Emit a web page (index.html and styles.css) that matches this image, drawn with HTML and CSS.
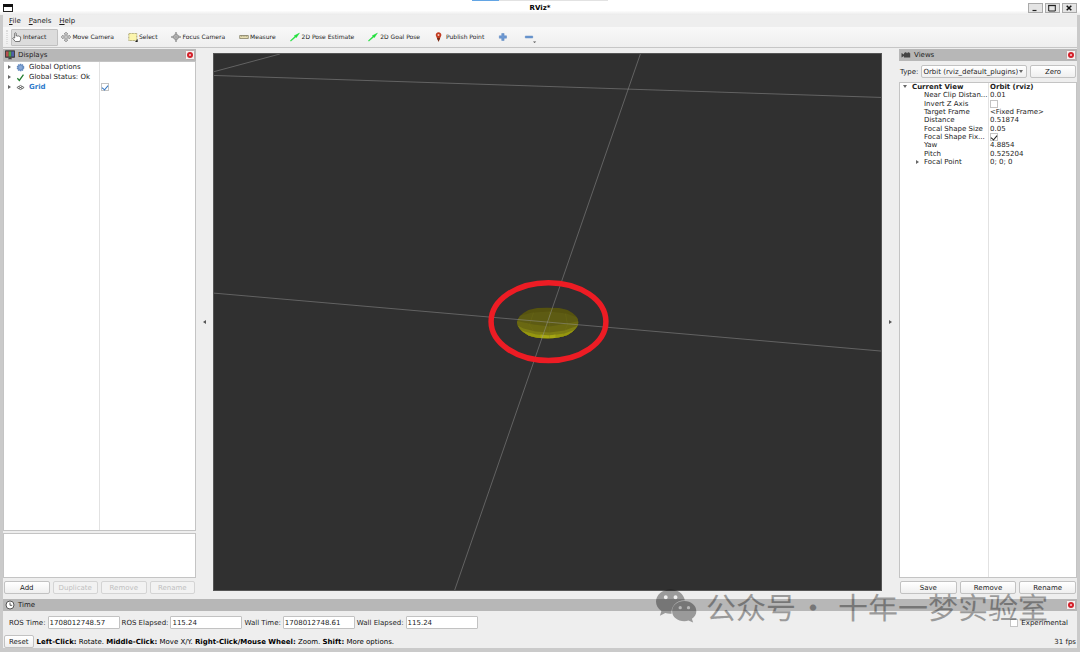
FILE: index.html
```html
<!DOCTYPE html>
<html lang="en">
<head>
<meta charset="utf-8">
<title>RViz*</title>
<link rel="stylesheet" href="styles.css">
</head>
<body>
<svg class="defs" aria-hidden="true">
  <symbol id="close" viewBox="0 0 11 11"><rect x=".5" y=".5" width="10" height="10" rx="1" fill="#f4f0f0" stroke="#b5a5a5"/><circle cx="5.5" cy="5.5" r="3.3" fill="#d4202a"/><path d="M4.500 4.500l2 2M6.500 4.500l-2 2" stroke="#fff" stroke-width=".7"/></symbol>
  <symbol id="cross" viewBox="0 0 10 10"><path d="M5 0l2 2H6v2h2V3l2 2-2 2V6H6v2h1l-2 2-2-2h1V6H2v1L0 5l2-2v1h2V2H3z" fill="#c4c4c4" stroke="#777" stroke-width=".5"/></symbol>
  <symbol id="arrow" viewBox="0 0 10 10"><path d="M.8 9.200L.4 8.500 5 4.200l-.8-.4L9.500 1 6.300 5.700l-.5-.6z" fill="#1fe03a" stroke="#1fe03a" stroke-width=".4"/></symbol>
</svg>

<div class="window">
  <header class="titlebar">
    <svg class="app-icon" viewBox="0 0 10 8"><rect x=".5" y=".5" width="9" height="7" fill="#fff" stroke="#222"/><path d="M0 0h10v3H0z" fill="#111"/></svg>
    <h1 class="title">RViz*</h1>
    <span class="progress"></span>
    <div class="window-buttons">
      <button aria-label="Minimize"><svg viewBox="0 0 8 8"><path d="M1.500 6.500h4" stroke="#222" stroke-width="1.200"/></svg></button>
      <button aria-label="Maximize"><svg viewBox="0 0 8 8"><path d="M.7 1.500h6.600v5.500H.7z" fill="none" stroke="#222"/><path d="M.2 1.500h7.600" stroke="#222" stroke-width="1.300"/></svg></button>
      <button aria-label="Close"><svg viewBox="0 0 8 8"><path d="M1.700 1.700l4.600 4.600M6.300 1.700L1.700 6.300" stroke="#111" stroke-width="1.500"/></svg></button>
    </div>
  </header>

  <nav class="menubar">
    <button><u>F</u>ile</button>
    <button><u>P</u>anels</button>
    <button><u>H</u>elp</button>
  </nav>

  <div class="toolbar">
    <span class="grip"></span>
    <button class="tool active"><svg viewBox="0 0 10 10"><path d="M2.700 6V1.300q.8-1 1.500 0V4q.8-.7 1.500.2.800-.6 1.400.2 1-.3 1.500.5v2.300L7.800 9.500H3.300L.7 6.300q.5-1 2-.3z" fill="#fff" stroke="#444" stroke-width=".7"/></svg>Interact</button>
    <button class="tool"><svg><use href="#cross"/></svg>Move Camera</button>
    <button class="tool"><svg viewBox="0 0 10 10"><path d="M.8 1.500h8v7h-8z" fill="#fbf5ad" stroke="#8b8447" stroke-width=".7" stroke-dasharray="1 .5"/><path d="M9.700 7v3H7z" fill="#222"/></svg>Select</button>
    <button class="tool"><svg viewBox="0 0 10 10"><path d="M5 0l1.200 3L10 5 6.500 6.200 5 10 3.700 6.500 0 5l3.500-1.500z" fill="#ccc" stroke="#888" stroke-width=".5"/><circle cx="5" cy="5" r="2.500" fill="none" stroke="#888" stroke-width=".7"/><path d="M5 0v10M0 5h10" stroke="#888" stroke-width=".6"/></svg>Focus Camera</button>
    <button class="tool"><svg viewBox="0 0 10 10"><path d="M.7 3.500h8.600v3H.7z" fill="#e8dfb4" stroke="#777258" stroke-width=".7"/><path d="M2.500 3.500V5M4.200 3.500V5M5.900 3.500V5M7.600 3.500V5" stroke="#777258" stroke-width=".4"/></svg>Measure</button>
    <button class="tool wide-label"><svg><use href="#arrow"/></svg>2D Pose Estimate</button>
    <button class="tool wide-label"><svg><use href="#arrow"/></svg>2D Goal Pose</button>
    <button class="tool wide-label"><svg viewBox="0 0 10 10"><path d="M4.500 9.800L1.800 3.600A2.800 2.800 0 1 1 7.300 3.600z" fill="#c23a20"/><path d="M3 6l1.500 3.800L6.200 6z" fill="#6f2d18"/><circle cx="4.500" cy="2.900" r="1" fill="#f5cfc0"/></svg>Publish Point</button>
    <button class="tool" aria-label="Add tool"><svg viewBox="0 0 10 10"><path d="M3.700 1.500h2.400v2.300h2.400v2.400H6.100v2.300H3.700V6.200H1.300V3.800h2.400z" fill="#6d98d2" stroke="#4a78b8" stroke-width=".4"/></svg></button>
    <button class="tool" aria-label="Remove tool"><svg class="wide" viewBox="0 0 14 10"><path d="M3.300 4h7.400v2H3.300z" fill="#6d98d2" stroke="#4a78b8" stroke-width=".4"/><path d="M11 9.500h3.200l-1.600 1.500z" fill="#555"/></svg></button>
  </div>

  <main class="workspace">
    <section class="panel displays">
      <h2 class="dock-title"><svg viewBox="0 0 10 10"><path d="M.4.8h9.200v6.500H.4z" fill="#333" stroke="#333" stroke-width=".8"/><path d="M1 1.400h2.700v5.200H1z" fill="#b85050"/><path d="M3.700 1.400h2.600v5.200H3.700z" fill="#4aa84a"/><path d="M6.300 1.400H9v5.200H6.300z" fill="#5060ac"/><path d="M3 9.300h4L6 7.500H4z" fill="#444"/></svg>Displays<button aria-label="Close Displays"><svg><use href="#close"/></svg></button></h2>
      <div class="box tree-box">
        <table class="tree">
          <tr><td><span class="row"><i class="twisty"></i><svg viewBox="0 0 10 10"><circle cx="5" cy="5" r="3.500" fill="#87a9d6" stroke="#6288bd" stroke-width="1.500" stroke-dasharray="1.500 .7"/><circle cx="5" cy="5" r="2.500" fill="#87a9d6" stroke="#5279b2" stroke-width=".5"/></svg>Global Options</span></td><td></td></tr>
          <tr><td><span class="row"><i class="twisty"></i><svg viewBox="0 0 10 10"><path d="M1.500 5.800l2.200 2.500L8.300 1.700" fill="none" stroke="#207c2c" stroke-width="1.400"/></svg>Global Status: Ok</span></td><td></td></tr>
          <tr><td><span class="row grid-name"><i class="twisty"></i><svg viewBox="0 0 10 10"><path d="M1 5l4-2.300L9 5 5 7.300zM3 3.900l4 2.300M3 6.200l4-2.300" fill="none" stroke="#555" stroke-width=".9"/></svg>Grid</span></td><td><input type="checkbox" class="check blue" checked aria-label="Grid enabled"></td></tr>
        </table>
      </div>
      <div class="box description"></div>
      <div class="actions">
        <button class="btn">Add</button>
        <button class="btn" disabled>Duplicate</button>
        <button class="btn" disabled>Remove</button>
        <button class="btn" disabled>Rename</button>
      </div>
    </section>

    <button class="collapse" aria-label="Hide left dock"><i class="left"></i></button>
    <div class="viewport">
      <svg class="scene" viewBox="213 53 668 537" preserveAspectRatio="none" role="img" aria-label="3D view">
        <defs>
          <clipPath id="disc"><path d="M516.500 322Q517 315 528 309.500 536 307 547 307 560 307 567 309.500 578 315 578 322 577 329 567 334.500 558 338 547 338 536 338 528 335 517 329 516.500 322z"/></clipPath>
        </defs>
        <g clip-path="url(#disc)">
          <path d="M515 305h65v35h-65z" fill="#56530f"/>
          <path d="M515 316l17-4 17-1 17 2 14 5v25h-65z" fill="#5d5b13"/>
          <path d="M515 320l18 4 16 2 18-3 13-3v20h-65z" fill="#6a6812"/>
          <path d="M515 324l8 4 12 3 14 1 15-2 11-4 5-3v17h-65z" fill="#7d7d14"/>
          <path d="M515 327l9 4 12 3 13 1 15-2 11-4 5-2v13h-65z" fill="#96970f"/>
          <path d="M540 334l8 1 7-1v4h-15z" fill="#a5a614"/>
          <path d="M533 312l-4 12 6 10M549 311v27M565 313l2 11-4 10" fill="none" stroke="#7a7a1c" stroke-width=".5" opacity=".5"/>
        </g>
        <path d="M213 70.700L279 53M213 74.500L881 96.500M213 292.500L881 350.500M640 53L454 590" fill="none" stroke="#999" stroke-width=".8" opacity=".6"/>
        <ellipse cx="548" cy="321" rx="57.500" ry="39" fill="none" stroke="#ed1c24" stroke-width="5.500"/>
      </svg>
    </div>
    <button class="collapse" aria-label="Hide right dock"><i class="right"></i></button>

    <section class="panel views">
      <h2 class="dock-title"><svg viewBox="0 0 10 10"><path d="M.5 3l2.500 1.500V3.200h6.200v4.300H3V6L.5 7.500z" fill="#444"/><circle cx="4.600" cy="3.500" r="1.200" fill="#444"/><circle cx="7.500" cy="3.500" r="1.200" fill="#444"/></svg>Views<button aria-label="Close Views"><svg><use href="#close"/></svg></button></h2>
      <div class="type-row">
        <label for="type">Type:</label>
        <span class="combo"><select id="type"><option>Orbit (rviz_default_plugins)</option></select><i class="twisty open"></i></span>
        <button class="btn zero">Zero</button>
      </div>
      <div class="box tree-box">
        <table class="props">
          <tr><th><i class="twisty open"></i>Current View</th><th>Orbit (rviz)</th></tr>
          <tr><td>Near Clip Distan...</td><td>0.01</td></tr>
          <tr><td>Invert Z Axis</td><td><input type="checkbox" class="check" aria-label="Invert Z Axis"></td></tr>
          <tr><td>Target Frame</td><td>&lt;Fixed Frame&gt;</td></tr>
          <tr><td>Distance</td><td>0.51874</td></tr>
          <tr><td>Focal Shape Size</td><td>0.05</td></tr>
          <tr><td>Focal Shape Fix...</td><td><input type="checkbox" class="check" checked aria-label="Focal Shape Fixed Size"></td></tr>
          <tr><td>Yaw</td><td>4.8854</td></tr>
          <tr><td>Pitch</td><td>0.525204</td></tr>
          <tr class="nested"><td><i class="twisty"></i>Focal Point</td><td>0; 0; 0</td></tr>
        </table>
      </div>
      <div class="actions">
        <button class="btn">Save</button>
        <button class="btn">Remove</button>
        <button class="btn">Rename</button>
      </div>
    </section>
  </main>

  <footer class="time">
    <h2 class="dock-title"><svg viewBox="0 0 10 10"><circle cx="5" cy="5" r="4" fill="#fff" stroke="#555"/><path d="M5 2.500V5.300h2.200" fill="none" stroke="#333" stroke-width=".8"/></svg>Time<button aria-label="Close Time"><svg><use href="#close"/></svg></button></h2>
    <div class="clocks">
      <label for="ros">ROS Time:</label><input id="ros" type="text" value="1708012748.57">
      <label for="rose">ROS Elapsed:</label><input id="rose" type="text" value="115.24">
      <label for="wall">Wall Time:</label><input id="wall" type="text" value="1708012748.61">
      <label for="walle">Wall Elapsed:</label><input id="walle" type="text" value="115.24">
      <label class="experimental"><input type="checkbox" class="check">Experimental</label>
    </div>
    <div class="status">
      <button class="btn">Reset</button>
      <p><b>Left-Click:</b> Rotate. <b>Middle-Click:</b> Move X/Y. <b>Right-Click/Mouse Wheel:</b> Zoom. <b>Shift:</b> More options.</p>
      <span class="fps">31 fps</span>
    </div>
  </footer>

  <div class="watermark">
    <svg viewBox="0 0 42 34"><path fill-rule="evenodd" d="M15 0C6.500 0 0 5.500 0 12.500c0 4 2 7.300 5.500 9.700L4 27l5.500-2.800c2 .6 4 .9 6.500.7C15 17 21 11 29.500 11 28.500 4.500 22.500 0 15 0zM10 6a2 2 0 1 1 0 4 2 2 0 0 1 0-4zM20 6a2 2 0 1 1 0 4 2 2 0 0 1 0-4z"/><path fill-rule="evenodd" d="M29 12c-7 0-12.500 4.500-12.500 10.300S22 32.500 29 32.500c1.700 0 3-.2 4.300-.6L38 34l-1.200-4c2.800-2 4.500-4.600 4.500-7.700C41.300 16.500 36 12 29 12zM24.800 17a1.700 1.700 0 1 1 0 3.400 1.700 1.700 0 0 1 0-3.400zM33.300 17a1.700 1.700 0 1 1 0 3.400 1.700 1.700 0 0 1 0-3.400z"/></svg>
    <span>公众号</span><span class="dot">·</span><span>十年一梦实验室</span>
  </div>
</div>
</body>
</html>
```
FILE: styles.css
```css
* { box-sizing: border-box; }

body {
  margin: 0;
  background: #cacaca;
  color: #1c1c1c;
  font: 7px/8px "DejaVu Sans", sans-serif;
  text-rendering: geometricPrecision;
}

button, input, select { font: inherit; color: inherit; margin: 0; }
button { background: none; border: 0; padding: 0; }
h1, h2, p { margin: 0; font: inherit; }
svg { display: block; flex: none; }
.defs { position: absolute; width: 0; height: 0; }

.window {
  position: relative;
  display: flex;
  flex-direction: column;
  min-height: 100vh;
  border: solid #cacaca;
  border-width: 0 3px 4px;
  background: #eee;
}

.titlebar {
  position: relative;
  display: flex;
  align-items: center;
  justify-content: space-between;
  height: 15px;
  margin: 0 -3px;
  padding: 0 3px;
  background: linear-gradient(#fff 70%, #eaeaea);
}
.app-icon { width: 10px; height: 8px; }
.title { margin-left: 39px; font-weight: bold; color: #000; }
.progress {
  position: absolute;
  top: 0;
  left: 50%;
  width: 136px;
  height: 1px;
  margin-left: -68px;
  background: linear-gradient(90deg, #63a5e4 27px, #e2e2e2 27px);
}
.window-buttons { display: flex; gap: 2px; }
.window-buttons button {
  display: grid;
  place-items: center;
  width: 15px;
  height: 10px;
  border: 1px solid #aaa;
  background: #e4e4e4;
}
.window-buttons svg { width: 8px; height: 8px; }

.menubar { display: flex; align-items: center; gap: 8px; height: 12px; padding-left: 6px; }
.menubar u { text-underline-offset: 1px; }

.toolbar {
  display: flex;
  align-items: center;
  gap: 3px;
  height: 21px;
  padding-left: 3px;
  border-bottom: 1px solid #c6c6c6;
  background: linear-gradient(#f8f8f8, #eee);
  font-size: 6px;
}
.grip { width: 2px; height: 14px; border: dotted #ddd; border-width: 0 1px; }
.tool {
  display: flex;
  align-items: center;
  gap: 1px;
  height: 17px;
  padding-right: 11px;
  border-radius: 1px;
}
.tool.active { border: 1px solid #c0c0c0; background: #dcdcdc; }
.tool.wide-label { gap: 2px; }
.tool svg { width: 10px; height: 10px; }
.tool .wide { width: 14px; overflow: visible; }

.workspace { display: flex; flex: 1; padding-top: 1px; }
.panel { display: flex; flex-direction: column; flex: none; }
.displays { width: 193px; }
.views { width: 178px; }

.dock-title {
  display: flex;
  align-items: center;
  gap: 3px;
  height: 12px;
  padding: 0 1px 0 2px;
  background: #b7b7b7;
}
.dock-title svg { width: 10px; height: 10px; }
.dock-title button { margin-left: auto; }

.box { border: 1px solid #c4c4c4; background: #fff; }
.tree-box { flex: 1; background: #fff linear-gradient(#e2e2e2, #e2e2e2) 95px 0 / 1px 100% no-repeat; }
.views .tree-box { background-position-x: 88px; }
.description { height: 45px; margin-top: 2px; }

table { width: 100%; border-collapse: collapse; table-layout: fixed; }
td, th { padding: 0; text-align: left; white-space: nowrap; }
.tree td { height: 10px; }
.tree td:first-child { width: 96px; }
.row { display: flex; align-items: center; gap: 4px; padding-left: 4px; }
.row svg { width: 9px; height: 9px; margin-left: 1px; }
.grid-name { color: #2d79cb; font-weight: bold; }

.twisty {
  display: inline-block;
  width: 0;
  height: 0;
  border: solid transparent;
  border-width: 2px 0 2px 3px;
  border-left-color: #666;
}
.twisty.open { border-width: 3px 2px 0; border-color: #666 transparent transparent; }

.check {
  appearance: none;
  display: grid;
  place-items: center;
  flex: none;
  width: 8px;
  height: 8px;
  border: 1px solid #c4c4c4;
  background: #fff;
}
.check:checked::after {
  content: "";
  width: 3px;
  height: 5px;
  border: solid #222;
  border-width: 0 1px 1px 0;
  transform: rotate(40deg);
}
.tree .check { margin-left: 1px; }
.check.blue:checked::after { border-color: #3478c4; }

.btn {
  height: 13px;
  padding: 0 4px;
  border: 1px solid #c2c2c2;
  border-radius: 2px;
  background: linear-gradient(#fff, #efefef);
}
.btn:disabled { border-color: #d4d4d4; color: #c0c0c0; background: #f2f2f2; }
.actions { display: flex; gap: 3px; padding: 3px 1px 5px; }
.actions .btn { flex: 1; }

.collapse { display: grid; place-items: center; flex: none; width: 17px; padding-bottom: 5px; }
.collapse i { border: solid transparent; border-width: 2px 3px; }
.collapse .left { border-right-color: #555; border-left-width: 0; }
.collapse .right { border-left-color: #555; border-right-width: 0; }
.viewport { display: flex; flex: 1; min-width: 0; padding: 4px 0 8px; }
.scene { width: 100%; height: 100%; background: #303030; border: 1px solid #555; }

.type-row { display: flex; align-items: center; gap: 3px; padding: 4px 1px; }
.combo {
  display: flex;
  align-items: center;
  flex: 1;
  min-width: 0;
  height: 13px;
  padding-right: 3px;
  border: 1px solid #c2c2c2;
  border-radius: 2px;
  background: linear-gradient(#fff, #efefef);
}
.combo select { appearance: none; flex: 1; min-width: 0; padding: 0 1px; border: 0; background: none; }
.type-row .zero { width: 46px; }

.props td, .props th { height: 8px; }
.props tr:nth-child(3n) td { height: 9px; }
.props td:first-child { width: 90px; padding-left: 24px; }
.props th:first-child { width: 90px; padding-left: 3px; }
.props .open { margin-right: 5px; vertical-align: 1px; }
.props .nested td:first-child { padding-left: 16px; }
.props .nested .twisty { margin-right: 5px; }

.clocks { display: flex; align-items: center; gap: 2px; padding: 5px 9px 5px 6px; }
.clocks input[type="text"] {
  width: 72px;
  height: 13px;
  padding: 0 1px;
  border: 1px solid #c2c2c2;
  border-radius: 1px;
  background: #fff;
}
.experimental { display: flex; align-items: center; gap: 3px; margin-left: auto; }
.status { display: flex; align-items: center; gap: 3px; padding: 1px 1px 0; }
.status p { flex: 1; color: #000; }

.watermark {
  position: absolute;
  right: 29px;
  bottom: 23px;
  display: flex;
  align-items: center;
  color: #000;
  font: 30px/38px "Noto Sans CJK SC", sans-serif;
  opacity: .35;
  pointer-events: none;
}
.watermark svg { width: 41px; height: 34px; margin-right: 9px; }
.watermark .dot { margin: 0 10px 0 2px; }
```
